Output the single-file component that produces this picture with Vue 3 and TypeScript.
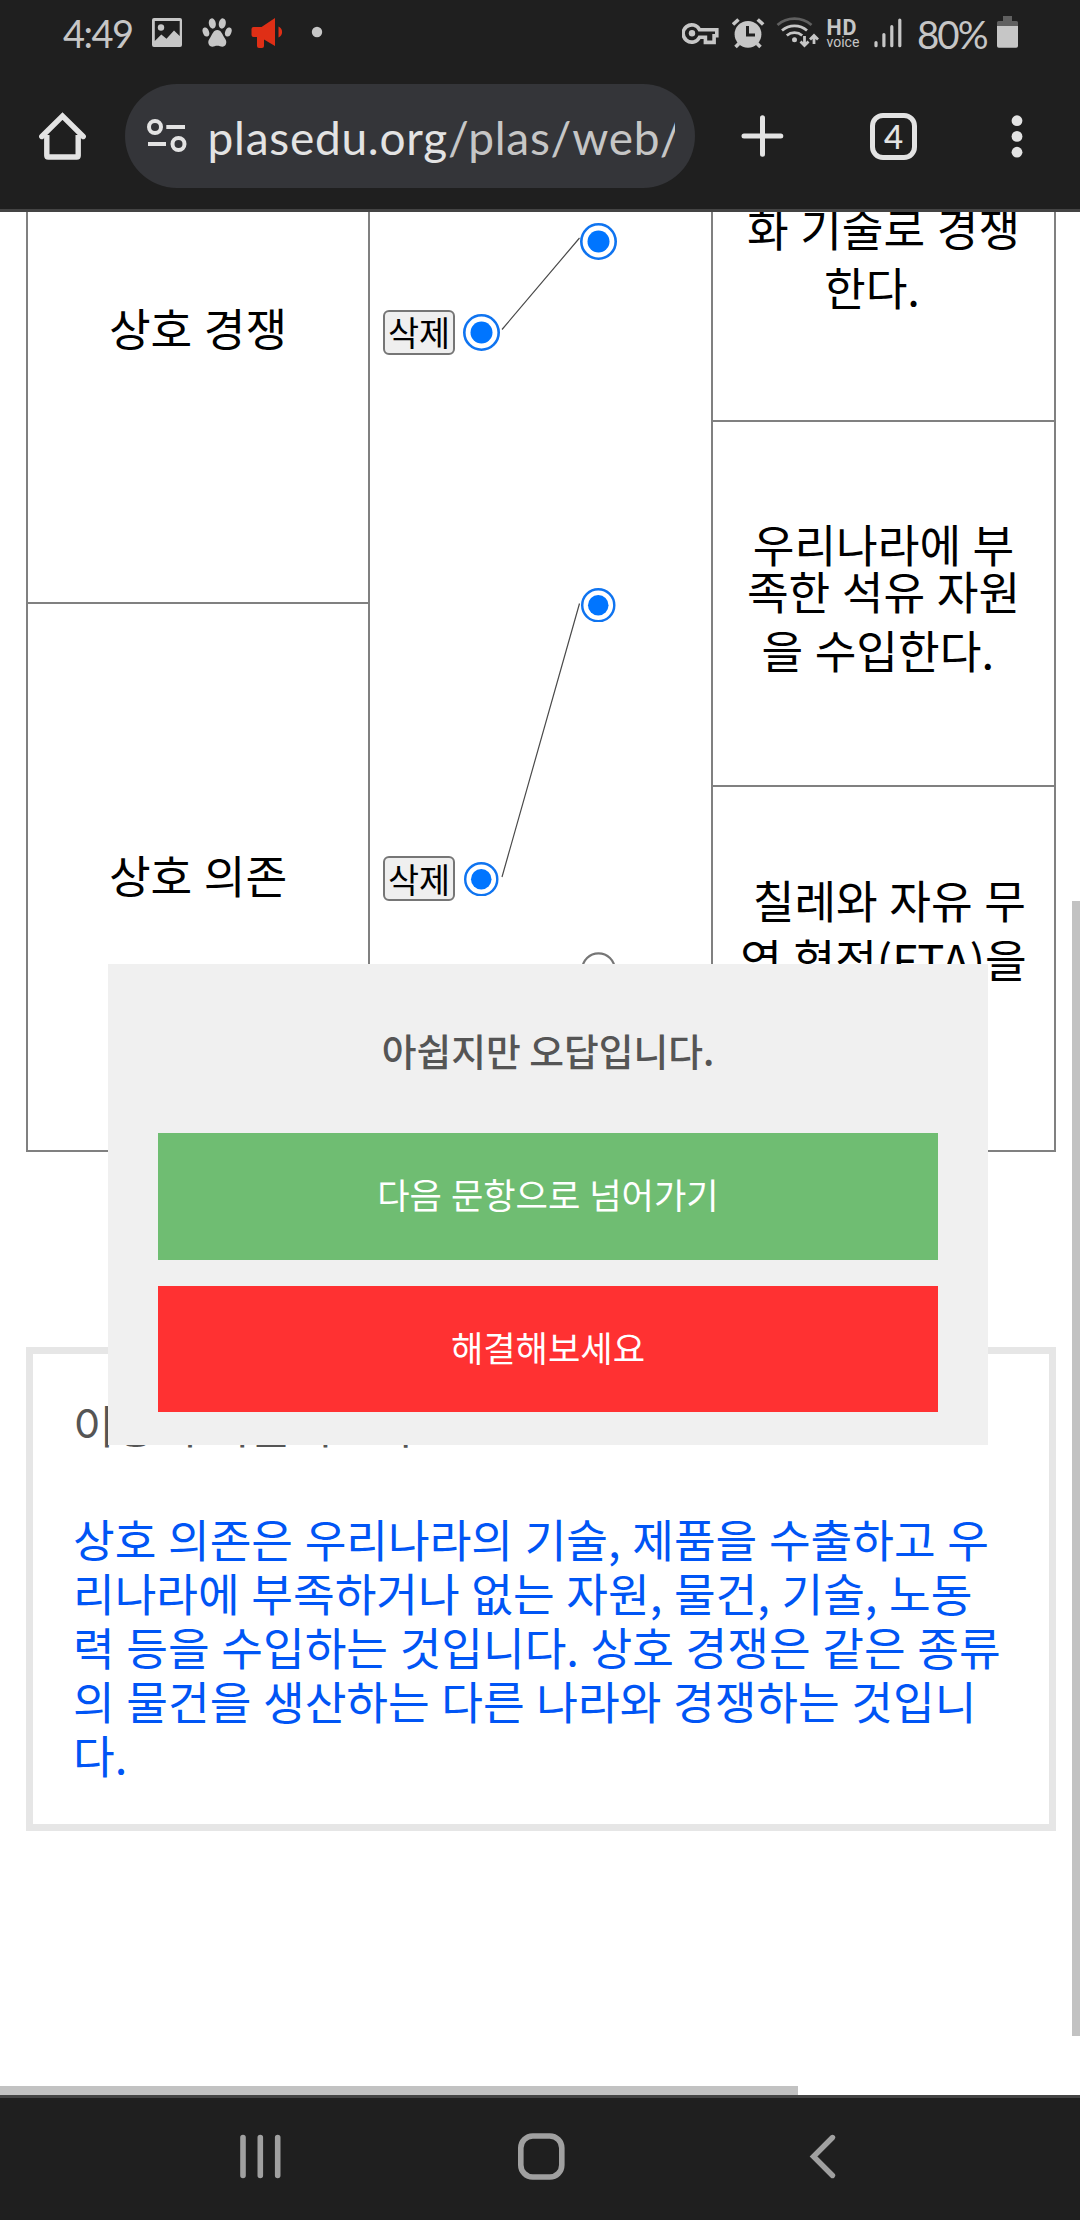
<script setup lang="ts">
interface Choice {
  lines: { text: string; height: number }[]
  offset: number
  dot: number
}

const terms = [
  { label: '상호 경쟁', dot: 37 },
  { label: '상호 의존', dot: 34.5 },
]

const choices: Choice[] = [
  {
    lines: [
      { text: '화 기술로 경쟁', height: 59 },
      { text: '한다.\u00a0\u00a0', height: 59 },
    ],
    offset: 139.5,
    dot: 37,
  },
  {
    lines: [
      { text: '우리나라에 부', height: 47 },
      { text: '족한 석유 자원', height: 47 },
      { text: '을 수입한다.\u00a0', height: 71 },
    ],
    offset: 98,
    dot: 34.5,
  },
  {
    lines: [
      { text: '\u00a0칠레와 자유 무', height: 59 },
      { text: '역 협정(FTA)을', height: 59 },
    ],
    offset: 83,
    dot: 0,
  },
]

const explanation = [
  '상호 의존은 우리나라의 기술, 제품을 수출하고 우',
  '리나라에 부족하거나 없는 자원, 물건, 기술, 노동',
  '력 등을 수입하는 것입니다. 상호 경쟁은 같은 종류',
  '의 물건을 생산하는 다른 나라와 경쟁하는 것입니',
  '다.',
]
</script>

<template>
  <div class="phone">
    <header class="chrome">
      <div class="status">
        <span class="clock">4:49</span>
        <svg class="ic-image" width="30" height="64" viewBox="152 0 30 64">
          <path fill="#c6c6c6" fill-rule="evenodd" d="M154 18h26a2 2 0 0 1 2 2v25a2 2 0 0 1-2 2h-26a2 2 0 0 1-2-2V20a2 2 0 0 1 2-2zm0.800 3v20l6.500-6.500 5.200 4.300 7.500-8.300 5.700 5.500V21z" />
          <circle cx="161" cy="27.500" r="3.200" fill="#c6c6c6" />
        </svg>
        <svg class="ic-paw" width="30" height="64" viewBox="202 0 30 64">
          <g fill="#c6c6c6">
            <ellipse cx="212.300" cy="23.500" rx="3.500" ry="5.200" transform="rotate(-10 212.300 23.500)" />
            <ellipse cx="222.300" cy="23.500" rx="3.500" ry="5.200" transform="rotate(10 222.300 23.500)" />
            <ellipse cx="205.900" cy="32" rx="3.100" ry="4.700" transform="rotate(-20 205.900 32)" />
            <ellipse cx="228.300" cy="32" rx="3.100" ry="4.700" transform="rotate(20 228.300 32)" />
            <path d="M217.300 30c4 0 5 4.600 7 7.500 1.800 2.500 2.500 4 1.700 6.500-1 3-4 3-6 2.200-1.800-.6-3.600-.6-5.400 0-2 .8-5 .8-6-2.200-.8-2.500 0-4 1.700-6.500 2-2.900 3-7.500 7-7.500z" />
          </g>
        </svg>
        <svg class="ic-horn" width="33" height="64" viewBox="251 0 33 64">
          <path fill="#df2f16" d="M275 18v28l-11-6.500V46q0 2-2 2h-3q-2 0-2-2v-9h-3.500q-2 0-2-2v-6q0-2 2-2h8zM278.500 26.500a6 6 0 0 1 0 11z" />
        </svg>
        <svg class="ic-dot" width="12" height="64" viewBox="311 0 12 64">
          <circle cx="317" cy="32" r="5.200" fill="#c6c6c6" />
        </svg>
        <svg class="ic-key" width="38" height="64" viewBox="682 0 38 64">
          <path fill="none" stroke="#c6c6c6" stroke-width="3.600" d="M699.500 29.800h17.300v6h-2.700v6.600h-8.700v-5.200h-5.900a8.600 8.600 0 1 1 0-7.400z" />
          <circle cx="692" cy="33.300" r="3.200" fill="#c6c6c6" />
        </svg>
        <svg class="ic-alarm" width="33" height="64" viewBox="732 0 33 64">
          <circle cx="748" cy="34.300" r="13.400" fill="#c6c6c6" />
          <path fill="none" stroke="#c6c6c6" stroke-width="3.600" d="M733 24.500l5.500-5M763.200 24.500l-5.500-5M739 43.500l-3.500 3.500M757 43.500l3.500 3.500" />
          <path fill="none" stroke="#1f1f1f" stroke-width="3" d="M747.500 26v9h7.500" />
        </svg>
        <svg class="ic-wifi" width="43" height="64" viewBox="776 0 43 64">
          <g fill="none" stroke-width="2.800">
            <path stroke="#606060" d="M777.500 25a26 26 0 0 1 34 0" />
            <path stroke="#c6c6c6" d="M782 30.500a19 19 0 0 1 25 0M786.800 35.500a12 12 0 0 1 15.400 0" />
          </g>
          <circle cx="794.500" cy="39.800" r="2.500" fill="#c6c6c6" />
          <path fill="none" stroke="#c6c6c6" stroke-width="2.800" d="M804.500 36v9M800.500 41.500l4 4 4-4M814 44v-8.500M810 39.500l4-4 4 4" />
        </svg>
        <span class="hd"><b>HD</b><i>voice</i></span>
        <svg class="ic-signal" width="28" height="64" viewBox="873.500 0 28 64">
          <path stroke="#c6c6c6" stroke-width="3.200" stroke-linecap="round" d="M875.500 42.500v3.200M883.400 34.500v11.200M891.300 26.700v19M899.300 20v25.700" />
        </svg>
        <span class="percent">80%</span>
        <svg class="ic-battery" width="21" height="64" viewBox="997 0 21 64">
          <path fill="#606060" d="M1003 16h9v5h4.500q1.500 0 1.500 1.500V27h-21v-4.500q0-1.500 1.500-1.500h4.500z" />
          <path fill="#c6c6c6" d="M997 26h21v20q0 1.800-1.800 1.800h-17.400q-1.800 0-1.800-1.800z" />
        </svg>
      </div>

      <div class="toolbar">
        <svg class="ic-home" width="50" height="104" viewBox="37 84 50 104">
          <path fill="none" stroke="#e3e3e3" stroke-width="5.400" stroke-linejoin="round" d="M46.800 135v20.500q0 1.500 1.500 1.500h28.400q1.500 0 1.500-1.500V135" />
          <path fill="none" stroke="#e3e3e3" stroke-width="5.400" stroke-linecap="round" d="M41.800 136.500L62.500 116l20.700 20.500" />
        </svg>
        <div class="omnibox">
          <svg class="ic-tune" width="40" height="104" viewBox="147 84 40 104">
            <g fill="none" stroke="#e3e3e3" stroke-width="4">
              <circle cx="155" cy="127" r="6" />
              <circle cx="178.500" cy="144" r="6" />
              <path d="M166.300 127H185M148 144h18" />
            </g>
          </svg>
          <span class="url"><b>plasedu.org</b>/plas/web/</span>
        </div>
        <svg class="ic-plus" width="43" height="104" viewBox="740.500 84 43 104">
          <path stroke="#e3e3e3" stroke-width="5" stroke-linecap="round" d="M743.500 136h36.800M762 117.700v36.600" />
        </svg>
        <div class="tabs">4</div>
        <svg class="ic-more" width="12" height="104" viewBox="1011.300 84 12 104">
          <g fill="#e3e3e3">
            <circle cx="1017.300" cy="120.700" r="5.400" />
            <circle cx="1017.300" cy="136.400" r="5.400" />
            <circle cx="1017.300" cy="152.200" r="5.400" />
          </g>
        </svg>
      </div>
    </header>

    <main class="page">
      <section class="match">
        <div class="terms">
          <div v-for="t in terms" :key="t.label" class="term">{{ t.label }}</div>
        </div>
        <div class="board">
          <div class="lane left">
            <div v-for="t in terms" :key="t.label" class="slot">
              <button class="remove">삭제</button>
              <svg class="radio" :width="t.dot" :height="t.dot" viewBox="0 0 37 37">
                <circle cx="18.500" cy="18.500" r="17.200" fill="none" stroke="#0f74f0" stroke-width="2.600" />
                <circle cx="18.500" cy="18.500" r="11" fill="#0075ff" />
              </svg>
            </div>
          </div>
          <div class="lane right">
            <div v-for="(c, i) in choices" :key="i" class="slot">
              <svg v-if="c.dot" class="radio" :width="c.dot" :height="c.dot" viewBox="0 0 37 37">
                <circle cx="18.500" cy="18.500" r="17.200" fill="none" stroke="#0f74f0" stroke-width="2.600" />
                <circle cx="18.500" cy="18.500" r="11" fill="#0075ff" />
              </svg>
              <svg v-else class="radio" width="35" height="35" viewBox="0 0 35 35">
                <circle cx="17.500" cy="17.500" r="16.200" fill="#fff" stroke="#767676" stroke-width="2.200" />
              </svg>
            </div>
          </div>
          <svg class="links" width="341" height="1094" viewBox="370 58 341 1094">
            <path fill="none" stroke="#4a4a4a" stroke-width="1.200" d="M502 329.500L579.500 238M502 877L579.500 603.500" />
          </svg>
        </div>
        <div class="answers">
          <div v-for="(c, i) in choices" :key="i" class="answer" :style="{ paddingTop: c.offset + 'px' }">
            <span v-for="l in c.lines" :key="l.text" :style="{ lineHeight: l.height + 'px' }">{{ l.text }}</span>
          </div>
        </div>
      </section>

      <section class="note">
        <h2>이상의 기술이 도구</h2>
        <p><span v-for="l in explanation" :key="l">{{ l }}</span></p>
      </section>

      <div class="dialog">
        <p>아쉽지만 오답입니다.</p>
        <button class="next">다음 문항으로 넘어가기</button>
        <button class="retry">해결해보세요</button>
      </div>
      <div class="scroll-y"></div>
      <div class="scroll-x"></div>
    </main>

    <nav class="nav">
      <svg width="44" height="122" viewBox="238 2098 44 122">
        <path stroke="#a0a0a0" stroke-width="5.600" stroke-linecap="round" d="M243 2137.500v38M260.300 2137.500v38M277.700 2137.500v38" />
      </svg>
      <svg class="nav-home" width="48" height="122" viewBox="517 2098 48 122">
        <rect x="520.800" y="2136" width="41" height="41" rx="12" fill="none" stroke="#a0a0a0" stroke-width="5.600" />
      </svg>
      <svg class="nav-back" width="30" height="122" viewBox="808 2098 30 122">
        <path fill="none" stroke="#a0a0a0" stroke-width="5.400" stroke-linecap="round" d="M832.500 2137.500L813.500 2156.500l19 19" />
      </svg>
    </nav>
  </div>
</template>

<style>
body {
  background: #fff;
}
</style>

<style scoped>
.phone {
  width: 1080px;
  height: 2220px;
  display: flex;
  flex-direction: column;
  overflow: hidden;
  font-family: "Noto Sans CJK KR", "Noto Sans", sans-serif;
}
.phone * {
  box-sizing: border-box;
}
svg {
  display: block;
  flex: none;
}
.chrome {
  height: 212px;
  flex: none;
  background: #1f1f1f;
  border-bottom: 3px solid #444;
}
.status {
  display: flex;
  height: 64px;
  margin-bottom: 20px;
  color: #c6c6c6;
  font-family: Lato, sans-serif;
}
.clock {
  width: 89px;
  margin-left: 63px;
  font-size: 38px;
  line-height: 67px;
  letter-spacing: -1.5px;
  white-space: nowrap;
}
.ic-paw { margin-left: 20px; }
.ic-horn { margin-left: 19px; }
.ic-dot { margin-left: 27px; }
.ic-key { margin-left: 359px; }
.ic-alarm { margin-left: 12px; }
.ic-wifi { margin-left: 11px; }
.hd {
  width: 33px;
  margin-left: 7.500px;
  padding-top: 17px;
  display: flex;
  flex-direction: column;
  font-family: Roboto, sans-serif;
  white-space: nowrap;
}
.hd b {
  font-size: 21.500px;
  line-height: 21px;
  letter-spacing: 0.800px;
}
.hd i {
  font-size: 14px;
  line-height: 9px;
  font-style: normal;
}
.ic-signal { margin-left: 14px; }
.percent {
  width: 80px;
  margin-left: 15.500px;
  font-size: 38.500px;
  line-height: 68px;
  letter-spacing: -2px;
  white-space: nowrap;
}
.toolbar {
  display: flex;
  align-items: center;
  height: 104px;
}
.ic-home { margin-left: 37px; }
.omnibox {
  display: flex;
  align-items: center;
  width: 570px;
  height: 104px;
  margin-left: 38px;
  padding-left: 22px;
  border-radius: 52px;
  background: #343539;
}
.url {
  width: 467px;
  margin-left: 20.500px;
  padding-top: 3px;
  overflow: hidden;
  font-family: Lato, sans-serif;
  font-size: 46px;
  line-height: 70px;
  letter-spacing: 0.750px;
  color: #c6c6c6;
  white-space: nowrap;
}
.url b {
  font-weight: 400;
  color: #e3e3e3;
}
.ic-plus { margin-left: 45.500px; }
.tabs {
  width: 47px;
  height: 47px;
  margin-left: 86.500px;
  border: 5.500px solid #e3e3e3;
  border-radius: 13px;
  color: #e3e3e3;
  font: 500 33px/36px Lato, sans-serif;
  text-align: center;
}
.ic-more { margin-left: 94px; }

.page {
  position: relative;
  height: 1883px;
  flex: none;
  overflow: hidden;
  background: #fff;
}
.match {
  display: flex;
  width: 1030px;
  height: 1096px;
  margin: -156px 0 0 26px;
  border: 2px solid #808080;
  font-size: 45.300px;
  word-spacing: 1.400px;
  color: #000;
}
.terms {
  width: 342px;
  flex: none;
  border-right: 2px solid #808080;
}
.term {
  display: flex;
  align-items: center;
  justify-content: center;
  height: 546px;
  line-height: 59px;
  padding-bottom: 5px;
  white-space: pre;
}
.term:first-child {
  border-bottom: 2px solid #808080;
}
.board {
  position: relative;
  display: flex;
  width: 341px;
  flex: none;
}
.lane {
  display: flex;
  flex-direction: column;
}
.left {
  width: 170px;
}
.right {
  width: 117px;
}
.slot {
  display: flex;
  align-items: center;
  justify-content: center;
  flex: 1;
  padding-top: 2px;
}
.left .slot {
  justify-content: flex-start;
  padding-top: 3px;
  padding-left: 13px;
}
.left .slot:last-child {
  padding-top: 4px;
}
.left .radio {
  margin: 0 auto 0 7.500px;
}
.left .slot:last-child .radio {
  margin-left: 9px;
}
.remove {
  width: 72px;
  height: 45px;
  padding: 0;
  border: 2px solid #767676;
  border-radius: 6px;
  background: #efefef;
  color: #000;
  font: 33.800px/38px "Noto Sans CJK KR", sans-serif;
  white-space: nowrap;
}
.links {
  position: absolute;
  left: 0;
  top: 0;
}
.answers {
  flex: 1;
  border-left: 2px solid #808080;
}
.answer {
  display: flex;
  flex-direction: column;
  align-items: center;
  height: 362px;
  white-space: pre;
}
.answer + .answer {
  height: 365px;
  border-top: 2px solid #808080;
}
.note {
  width: 1030px;
  height: 484px;
  margin: 195px 0 0 26px;
  padding: 41px 0 0 40px;
  border: 7px solid #e6e6e6;
}
.note h2 {
  margin: 0;
  font-size: 45.300px;
  font-weight: 400;
  line-height: 58px;
  color: #555;
}
.note p {
  display: flex;
  flex-direction: column;
  margin: 58px 0 0;
  font-size: 45.300px;
  line-height: 54px;
  word-spacing: 1.500px;
  color: #0055f5;
  white-space: pre;
}
.dialog {
  position: absolute;
  left: 108px;
  top: 752px;
  width: 880px;
  height: 481px;
  padding: 50px 50px 0;
  display: flex;
  flex-direction: column;
  background: #f0f0f0;
}
.dialog p {
  margin: 0;
  height: 119px;
  font-size: 37.800px;
  font-weight: 500;
  line-height: 72px;
  color: #555;
  text-align: center;
}
.dialog button {
  height: 126px;
  flex: none;
  padding: 0 0 4px;
  border: 0;
  font: 35.200px/52px "Noto Sans CJK KR", sans-serif;
  word-spacing: 1px;
  color: #fff;
}
.dialog .next {
  height: 127px;
  padding-bottom: 6px;
  background: #6fbd72;
}
.dialog .retry {
  margin-top: 26px;
  background: #ff3132;
}
.scroll-y {
  position: absolute;
  right: 0;
  top: 689px;
  width: 8px;
  height: 1135px;
  background: #c2c2c2;
}
.scroll-x {
  position: absolute;
  left: 0;
  bottom: 0;
  width: 798px;
  height: 9px;
  background: #c2c2c2;
}
.nav {
  display: flex;
  height: 125px;
  flex: none;
  padding-left: 238px;
  border-top: 3px solid #444;
  background: #1f1f1f;
}
.nav-home { margin-left: 235px; }
.nav-back { margin-left: 243px; }
</style>
